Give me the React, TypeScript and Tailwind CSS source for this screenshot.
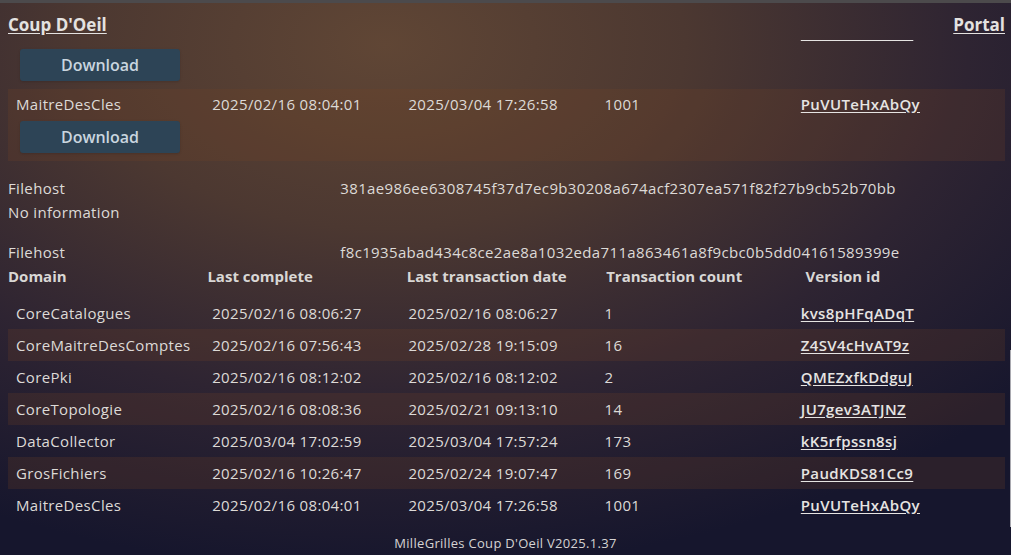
import React from "react";

type Domain = {
  name: string;
  lastComplete: string;
  lastTransaction: string;
  count: number;
  version: string;
};

const domains: Domain[] = [
  { name: "CoreCatalogues", lastComplete: "2025/02/16 08:06:27", lastTransaction: "2025/02/16 08:06:27", count: 1, version: "kvs8pHFqADqT" },
  { name: "CoreMaitreDesComptes", lastComplete: "2025/02/16 07:56:43", lastTransaction: "2025/02/28 19:15:09", count: 16, version: "Z4SV4cHvAT9z" },
  { name: "CorePki", lastComplete: "2025/02/16 08:12:02", lastTransaction: "2025/02/16 08:12:02", count: 2, version: "QMEZxfkDdguJ" },
  { name: "CoreTopologie", lastComplete: "2025/02/16 08:08:36", lastTransaction: "2025/02/21 09:13:10", count: 14, version: "JU7gev3ATJNZ" },
  { name: "DataCollector", lastComplete: "2025/03/04 17:02:59", lastTransaction: "2025/03/04 17:57:24", count: 173, version: "kK5rfpssn8sj" },
  { name: "GrosFichiers", lastComplete: "2025/02/16 10:26:47", lastTransaction: "2025/02/24 19:07:47", count: 169, version: "PaudKDS81Cc9" },
  { name: "MaitreDesCles", lastComplete: "2025/02/16 08:04:01", lastTransaction: "2025/03/04 17:26:58", count: 1001, version: "PuVUTeHxAbQy" },
];

function DomainCells({ d }: { d: Domain }) {
  return (
    <>
      <div>{d.name}</div>
      <div>{d.lastComplete}</div>
      <div>{d.lastTransaction}</div>
      <div>{d.count}</div>
      <div>
        <a href="#" className="font-semibold underline underline-offset-2 text-[#e6e4e2]">
          {d.version}
        </a>
      </div>
    </>
  );
}

// Backup rows: domain line plus a download button underneath
function BackupRow({ d, odd }: { d: Domain; odd: boolean }) {
  return (
    <div className={`px-2 pt-[3px] pb-2 ${odd ? "bg-[rgba(120,70,35,0.22)]" : ""}`}>
      <div className="grid grid-cols-5 leading-6">
        <DomainCells d={d} />
      </div>
      <button className="mt-[5px] ml-1 h-8 w-40 rounded-[3px] bg-[#2d4456] text-base font-semibold tracking-normal text-[#c9d5df] shadow-sm">
        Download
      </button>
    </div>
  );
}

export default function App() {
  return (
    <div className="h-[555px] w-full flex flex-col overflow-hidden text-[15px] tracking-[0.35px] text-[#dddad7] font-['Open_Sans',sans-serif] bg-[radial-gradient(ellipse_85%_95%_at_38%_8%,#604635_0%,#4c3831_35%,#2e2432_68%,#16162d_100%)]">
      <div className="h-[3px] shrink-0 bg-[#4c4a4c]" />

      {/* Top bar */}
      <header className="h-[36px] shrink-0 pt-[10px] pl-2 pr-1.5 flex justify-between items-start leading-6 tracking-normal">
        <a href="#" className="text-[17px] font-bold underline underline-offset-2 text-[#e4e2e0]">
          Coup D'Oeil
        </a>
        <a href="#" className="text-[17px] font-bold underline underline-offset-2 text-[#e4e2e0]">
          Portal
        </a>
      </header>

      {/* Scrolled content */}
      <main className="relative flex-1 flex flex-col overflow-hidden pl-2 pr-1.5">
        <div className="-mt-[22px] shrink-0">
          <BackupRow d={domains[5]} odd={false} />
          <BackupRow d={domains[6]} odd={true} />

          <div className="mt-[15px] leading-6">
            <div className="grid grid-cols-3">
              <div>Filehost</div>
              <div className="col-span-2">381ae986ee6308745f37d7ec9b30208a674acf2307ea571f82f27b9cb52b70bb</div>
            </div>
            <div>No information</div>
          </div>

          <div className="mt-4 leading-6">
            <div className="grid grid-cols-3">
              <div>Filehost</div>
              <div className="col-span-2">f8c1935abad434c8ce2ae8a1032eda711a863461a8f9cbc0b5dd04161589399e</div>
            </div>
            <div className="grid grid-cols-5 font-bold tracking-normal text-[#d9d7d5]">
              <div>Domain</div>
              <div>Last complete</div>
              <div>Last transaction date</div>
              <div>Transaction count</div>
              <div>Version id</div>
            </div>
          </div>

          <div className="mt-[9px]">
            {domains.map((d, i) => (
              <div
                key={d.name}
                className={`grid grid-cols-5 items-center h-8 px-2 ${i % 2 === 1 ? "bg-[rgba(120,70,35,0.22)]" : ""}`}
              >
                <DomainCells d={d} />
              </div>
            ))}
          </div>
        </div>

        {/* scrollbar thumb */}
        <div className="absolute right-0 top-[311px] h-[177px] w-px bg-[#a9a9b0]" />
      </main>

      <footer className="h-6 shrink-0 leading-6 text-center text-[13px] tracking-[0.3px] text-[#d5d3d3]">
        MilleGrilles Coup D'Oeil V2025.1.37
      </footer>
    </div>
  );
}
